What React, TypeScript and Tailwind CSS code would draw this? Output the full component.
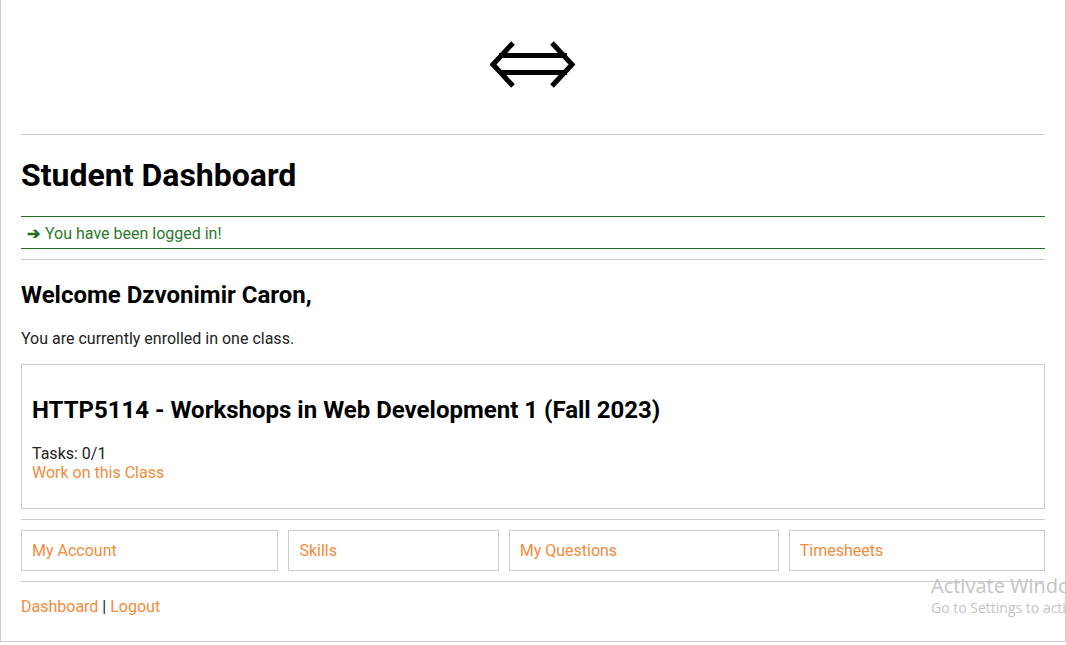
import React from "react";

const links = ["My Account", "Skills", "My Questions", "Timesheets"];

function Logo() {
  return (
    <svg width="86" height="48" viewBox="0 0 86 48" fill="none" stroke="#000" strokeWidth="5">
      <polyline points="23,2 3,23.5 23,45" />
      <polyline points="62,2 82,23.5 62,45" />
      <line x1="9" y1="14.5" x2="77" y2="14.5" />
      <line x1="9" y1="31.5" x2="77" y2="31.5" />
    </svg>
  );
}

export default function App() {
  return (
    <div className="relative h-[645px] w-[1066px] overflow-hidden bg-white font-['Roboto',sans-serif] text-[16px] leading-[19px] text-[#222]">
      <div className="h-[642px] border-x border-b border-[#ccc] px-[20px]">
        <header className="flex justify-center pt-[41px]">
          <Logo />
        </header>
        <hr className="mt-[45px] border-[#ccc]" />

        <h1 className="mt-[22px] text-[32px] leading-[37px] font-bold text-black">Student Dashboard</h1>

        <div className="mt-[22px] border-y border-[#1f6f1f] pl-[6px] pt-[7px] pb-[5px] text-[#2b7a2b]">
          <span className="mr-[1px] font-bold text-[#1f6f1f]">➔</span> You have been logged in!
        </div>
        <hr className="mt-[10px] border-[#ccc]" />

        <h2 className="mt-[21px] text-[24px] leading-[28px] font-bold text-black">Welcome Dzvonimir Caron,</h2>
        <p className="mt-[20px]">You are currently enrolled in one class.</p>

        <div className="mt-[16px] border border-[#ccc] px-[10px] pt-[31px] pb-[26px]">
          <h2 className="text-[24px] leading-[28px] font-bold text-black">
            HTTP5114 - Workshops in Web Development 1 (Fall 2023)
          </h2>
          <p className="mt-[20px]">Tasks: 0/1</p>
          <a href="#" className="block text-[#f28b3c]">
            Work on this Class
          </a>
        </div>
        <hr className="mt-[10px] border-[#ccc]" />

        <nav className="mt-[10px] flex gap-[10px]">
          {links.map((label) => (
            <a key={label} href="#" className="flex-auto border border-[#ccc] p-[10px] text-[#f28b3c]">
              {label}
            </a>
          ))}
        </nav>
        <hr className="mt-[10px] border-[#ccc]" />

        <p className="mt-[15px]">
          <a href="#" className="text-[#f28b3c]">Dashboard</a> | <a href="#" className="text-[#f28b3c]">Logout</a>
        </p>
      </div>

      <div className="absolute left-[931px] top-[574px] whitespace-nowrap font-['Open_Sans',sans-serif] text-[#c4c4c4]">
        <p className="text-[20px] leading-[24px]">Activate Windows</p>
        <p className="text-[14px] leading-[20px]">Go to Settings to activate Windows.</p>
      </div>
    </div>
  );
}
